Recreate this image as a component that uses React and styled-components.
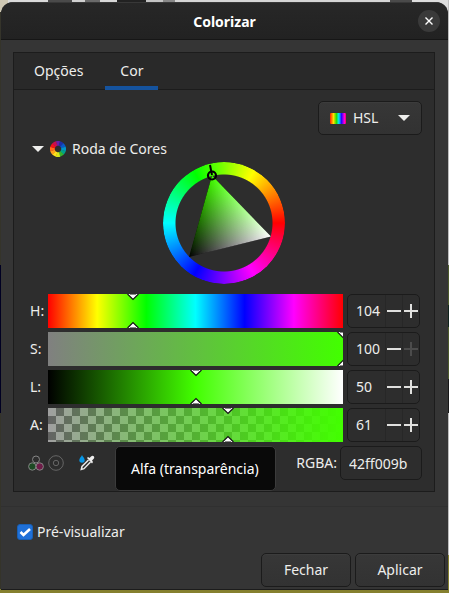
import React, { useState } from "react";
import styled, { createGlobalStyle, css } from "styled-components";

const GlobalStyle = createGlobalStyle`
  * { box-sizing: border-box; }
  body {
    margin: 0;
    background: #26251f;
    color: #eeeeec;
    font: 14px/20px "Noto Sans", "Open Sans", sans-serif;
  }
  button, input { font: inherit; color: inherit; }
`;

const Desktop = styled.div`
  min-height: 100vh;
  padding: 2px 1px 3px;
  background:
    linear-gradient(#85802f, #85802f) bottom / 100% 4px no-repeat,
    linear-gradient(#000022, #000022) 0 265px / 1px 148px no-repeat,
    linear-gradient(#4c5a2c 0 40px, #10241c 40px 62px, #4c5a2c 62px 114px, #181818 114px 148px, #bdbdbd 148px 290px, #85802f 290px) right 265px / 1px 328px no-repeat,
    linear-gradient(#bdbdbd, #bdbdbd) right 0 / 1px 265px no-repeat,
    linear-gradient(90deg, #cfc8b4 0 8px, #dadada 8px 48px, #4a4a4a 48px 72px, #d0d0d0 72px 85px, #6a6a6a 85px 100px, #d8d8d8 100px 117px, #222222 117px 146px, #c4c4c4 146px 163px, #888888 163px 175px, #d5d5d5 175px 390px, #4a4a4a 390px 412px, #dddddd 412px) top / 100% 12px no-repeat,
    #35342a;
`;

const Dialog = styled.main`
  display: flex;
  flex-direction: column;
  min-height: calc(100vh - 5px);
  background: #353535;
  border-radius: 12px 12px 0 0;
  border-bottom: 1px solid #1c1c1c;
  overflow: hidden;
`;

const TitleBar = styled.header`
  display: grid;
  grid-template-columns: 30px 1fr 30px;
  align-items: center;
  height: 38px;
  background: linear-gradient(#272727, #222222);
  border-top: 1px solid #383838;
  border-bottom: 1px solid #161616;
`;

const Title = styled.h1`
  grid-column: 2;
  margin: 0;
  padding-top: 1px;
  font-size: 14px;
  line-height: 20px;
  text-align: center;
  color: #ffffff;
`;

const CloseButton = styled.button`
  display: grid;
  place-items: center;
  width: 22px;
  height: 22px;
  padding: 0;
  border: 0;
  border-radius: 50%;
  background: #3a3a3a;
`;

const Panel = styled.section`
  margin: 12px 13px 0 12px;
  border: 1px solid #1c1c1c;
  background: #2d2d2d;
`;

const Tabs = styled.div`
  display: flex;
  gap: 6px;
  height: 37px;
  padding-left: 4px;
  background: #292929;
  border-bottom: 1px solid #1c1c1c;
`;

const Tab = styled.button`
  height: 37px;
  padding: 2px ${(p) => (p.$active ? 15 : 16)}px 0;
  border: 0;
  border-bottom: 4px solid ${(p) => (p.$active ? "#15539e" : "transparent")};
  background: none;
`;

const TabBody = styled.div`
  padding: 11px 12px 11px 14px;
`;

const surface = css`
  border: 1px solid #1b1b1b;
  border-radius: 5px;
  background: linear-gradient(#373737, #323232);
  box-shadow: inset 0 1px #3c3c3c;
`;

const ModeButton = styled.button`
  ${surface}
  display: flex;
  align-items: center;
  width: 104px;
  height: 34px;
  margin-left: auto;
  padding: 0 11px;
  gap: 7px;
`;

const Spectrum = styled.span`
  width: 16px;
  height: 11px;
  border-radius: 1px;
  background: linear-gradient(90deg, #ff1a00, #ffe000 22%, #22e000 40%, #00e5ff 55%, #2a00ff 72%, #ff00dd 90%, #ff0055);
`;

const Arrow = styled.span`
  width: 12px;
  height: 6px;
  margin-left: ${(p) => (p.$end ? "auto" : 0)};
  background: #eeeeec;
  clip-path: polygon(0 0, 100% 0, 50% 100%);
`;

const Expander = styled.button`
  display: flex;
  align-items: center;
  gap: 6px;
  height: 26px;
  margin-top: 1px;
  padding: 0 4px;
  border: 0;
  background: none;
`;

const WheelArea = styled.div`
  display: grid;
  place-items: center;
  padding: 0 2px 10px 0;
`;

const Wheel = styled.div`
  display: grid;
  width: 122px;
  height: 122px;
  > * { grid-area: 1 / 1; }
`;

const HueRing = styled.div`
  border-radius: 50%;
  background: conic-gradient(from 90deg, #f00, #f0f, #00f, #0ff, #0f0, #ff0, #f00);
  mask: radial-gradient(circle closest-side, transparent 48px, #000 49px);
`;

const Triangle = styled.svg`
  isolation: isolate;
  .add { mix-blend-mode: plus-lighter; }
`;

const Channels = styled.div`
  display: grid;
  gap: 4px;
`;

const Channel = styled.div`
  display: grid;
  grid-template-columns: 16px 1fr 73px;
  gap: 4px;
  align-items: center;
  height: 34px;
  padding: 0 2px 0 0;
`;

const ChannelLabel = styled.label`
  padding-left: 2px;
  white-space: nowrap;
`;

const Track = styled.div`
  position: relative;
  height: 34px;
  overflow: hidden;
  background: ${(p) => p.$fill};
`;

const Range = styled.input`
  width: 100%;
  height: 100%;
  margin: 0;
  opacity: 0;
`;

const Marker = styled.svg`
  position: absolute;
  top: 0;
  width: 12px;
  height: 34px;
  transform: translateX(-50%);
  pointer-events: none;
`;

const Spin = styled.div`
  display: grid;
  grid-template-columns: 1fr 17px 17px;
  height: 34px;
  border: 1px solid #1b1b1b;
  border-radius: 5px;
  background: #2d2d2d;
`;

const SpinValue = styled.input`
  width: 100%;
  min-width: 0;
  padding: 0 0 0 8px;
  border: 0;
  background: none;
`;

const Step = styled.button`
  display: grid;
  place-items: center;
  padding: 0;
  border: 0;
  border-left: 1px solid #272727;
  background: none;
  color: #e0e0de;
  &:disabled { color: #4c4c4c; }
`;

const Footer = styled.div`
  position: relative;
  display: flex;
  align-items: center;
  height: 34px;
  margin: 4px 0 0 -2px;
`;

const IconButton = styled.button`
  display: grid;
  place-items: center;
  width: 20px;
  height: 20px;
  padding: 0;
  border: 0;
  background: none;
  & + &:last-of-type { margin-left: 11px; }
`;

const HexLabel = styled.label`
  margin-left: auto;
  margin-right: 3px;
`;

const HexInput = styled.input`
  width: 82px;
  height: 34px;
  padding: 0 8px;
  border: 1px solid #1b1b1b;
  border-radius: 5px;
  background: #2d2d2d;
`;

const Tooltip = styled.div`
  position: absolute;
  top: 0;
  left: 89px;
  padding: 11px 16px 11px 15px;
  border: 1px solid #3b3b3b;
  border-radius: 5px;
  background: #090909;
  color: #ffffff;
  line-height: 21px;
  white-space: nowrap;
`;

const Bottom = styled.div`
  margin-top: 14px;
  padding: 17px 3px 2px;
  border-top: 1px solid #303030;
`;

const Preview = styled.label`
  display: flex;
  align-items: center;
  gap: 4px;
  height: 16px;
  margin-left: 13px;
`;

const CheckBox = styled.input`
  appearance: none;
  width: 16px;
  height: 16px;
  margin: 0;
  border: 1px solid #185fb4;
  border-radius: 3px;
  background: #2d2d2d;
  &:checked { background: #1f70d8; }
`;

const CheckStack = styled.span`
  display: grid;
  > * { grid-area: 1 / 1; }
  svg { pointer-events: none; }
`;

const Actions = styled.div`
  display: flex;
  justify-content: flex-end;
  gap: 4px;
  margin-top: 13px;
`;

const ActionButton = styled.button`
  ${surface}
  width: 90px;
  height: 34px;
  padding: 0;
`;

const checker = "repeating-conic-gradient(#646464 0 25%, #a0a0a0 0 50%) 0 0 / 16px 16px";

const channels = [
  { id: "H", value: 104, max: 360, fill: "linear-gradient(90deg, #f00, #ff0, #0f0, #0ff, #00f, #f0f, #f00)" },
  { id: "S", value: 100, max: 100, fill: "linear-gradient(90deg, #808080, #42ff00)" },
  { id: "L", value: 50, max: 100, fill: "linear-gradient(90deg, #000, #42ff00, #fff)" },
  { id: "A", value: 61, max: 100, fill: `linear-gradient(90deg, #42ff0000, #42ff00), ${checker}` },
];

const names = { H: "Matiz", S: "Saturação", L: "Luminosidade", A: "Alfa" };

function ChannelRow({ id, value: initial, max, fill }) {
  const [value, setValue] = useState(initial);
  const update = (n) => setValue(Math.max(0, Math.min(max, Number(n) || 0)));
  return (
    <Channel>
      <ChannelLabel htmlFor={`channel-${id}`}>{id}:</ChannelLabel>
      <Track $fill={fill}>
        <Range type="range" aria-label={names[id]} min="0" max={max} value={value} onChange={(e) => update(e.target.value)} />
        <Marker viewBox="0 0 12 34" style={{ left: `${(value / max) * 100}%` }}>
          <path d="M.5 0 6 5.500 11.500 0M.5 34 6 28.500 11.500 34" fill="#fff" stroke="#111" strokeWidth="1.200" />
          <path d="M3 .5h6M3 33.500h6" stroke="#888" />
        </Marker>
      </Track>
      <Spin>
        <SpinValue id={`channel-${id}`} value={value} onChange={(e) => update(e.target.value)} />
        <Step aria-label={`Diminuir ${names[id]}`} disabled={value <= 0} onClick={() => update(value - 1)}>
          <svg width="14" height="14"><path d="M0 7h14" stroke="currentColor" strokeWidth="2" /></svg>
        </Step>
        <Step aria-label={`Aumentar ${names[id]}`} disabled={value >= max} onClick={() => update(value + 1)}>
          <svg width="14" height="14"><path d="M0 7h14M7 0v14" stroke="currentColor" strokeWidth="2" /></svg>
        </Step>
      </Spin>
    </Channel>
  );
}

const slices = ["#6b1fa8", "#1c2fa8", "#0858c8", "#0095c8", "#00a38a", "#35b32e", "#d8e81a", "#ffe01a", "#ffa01a", "#ff6b1a", "#f3121a", "#c80d50"];

function WheelIcon() {
  return (
    <svg width="16" height="16" viewBox="-8 -8 16 16">
      {slices.map((color, i) => (
        <path key={color} d="M-1-3.200-2.200-7.700A8 8 0 0 1 2.200-7.700L1-3.200Z" fill={color} transform={`rotate(${i * 30})`} />
      ))}
    </svg>
  );
}

export default function App() {
  const [preview, setPreview] = useState(true);
  const [tab, setTab] = useState("Cor");
  const [hex, setHex] = useState("42ff009b");
  return (
    <>
      <GlobalStyle />
      <Desktop>
        <Dialog>
          <TitleBar>
            <Title>Colorizar</Title>
            <CloseButton aria-label="Fechar janela">
              <svg width="10" height="10"><path d="m1.500 1.500 7 7m0-7-7 7" stroke="#fff" strokeWidth="1.400" /></svg>
            </CloseButton>
          </TitleBar>
          <Panel>
            <Tabs role="tablist">
              {["Opções", "Cor"].map((name) => (
                <Tab key={name} role="tab" aria-selected={tab === name} $active={tab === name} onClick={() => setTab(name)}>{name}</Tab>
              ))}
            </Tabs>
            <TabBody>
              <ModeButton aria-haspopup="listbox"><Spectrum />HSL<Arrow $end /></ModeButton>
              <Expander aria-expanded="true"><Arrow /><WheelIcon />Roda de Cores</Expander>
              <WheelArea>
                <Wheel>
                  <HueRing />
                  <Triangle width="122" height="122">
                    <defs>
                      <linearGradient id="hue" gradientUnits="userSpaceOnUse" x1="67" y1="84.700" x2="49" y2="13.500">
                        <stop stopColor="#42ff00" stopOpacity="0" /><stop offset="1" stopColor="#42ff00" />
                      </linearGradient>
                      <linearGradient id="white" gradientUnits="userSpaceOnUse" x1="37.400" y1="54.300" x2="108" y2="74.500">
                        <stop stopColor="#fff" stopOpacity="0" /><stop offset="1" stopColor="#fff" />
                      </linearGradient>
                    </defs>
                    <path d="M49 13.500 108 74.500 26 95Z" fill="#000" />
                    <path className="add" d="M49 13.500 108 74.500 26 95Z" fill="url(#hue)" />
                    <path className="add" d="M49 13.500 108 74.500 26 95Z" fill="url(#white)" />
                    <path d="M47 3l2 10" stroke="#000" strokeWidth="2" />
                    <circle cx="49" cy="13.500" r="4" fill="none" stroke="#000" strokeWidth="2.200" />
                  </Triangle>
                </Wheel>
              </WheelArea>
              <Channels>
                {channels.map((c) => <ChannelRow key={c.id} {...c} />)}
              </Channels>
              <Footer>
                <IconButton aria-label="Fora do gamut">
                  <svg width="16" height="16" fill="none" stroke="#858585">
                    <circle cx="8" cy="4.500" r="3.500" />
                    <circle cx="4.300" cy="11.500" r="3.700" fill="#1d4a24" />
                    <circle cx="11.700" cy="11.500" r="3.700" fill="#6e1c48" />
                  </svg>
                </IconButton>
                <IconButton aria-label="Cores na web">
                  <svg width="16" height="16" fill="none" stroke="#666">
                    <circle cx="8" cy="8" r="7.300" /><circle cx="8" cy="8" r="2.700" />
                  </svg>
                </IconButton>
                <IconButton aria-label="Seletor de cores">
                  <svg width="16" height="16">
                    <path d="M3 0C2.500 1.500.3 3.100.3 5a2.700 2.700 0 0 0 5.400 0C5.700 3.100 3.500 1.500 3 0Z" fill="#0795e5" />
                    <path d="M9.500 5 3 11.500 2.300 14.500 5 13.700 11.500 7" fill="none" stroke="#e8e8e8" strokeWidth="1.500" />
                    <path d="m8 3 1-1 1.500 1L12 1.500c2-2 4.500.5 2.500 2.500L13 5.500 14 7l-1 1.500Z" fill="#eee" />
                  </svg>
                </IconButton>
                <HexLabel htmlFor="hex">RGBA:</HexLabel>
                <HexInput id="hex" value={hex} onChange={(e) => setHex(e.target.value)} />
                <Tooltip role="tooltip">Alfa (transparência)</Tooltip>
              </Footer>
            </TabBody>
          </Panel>
          <Bottom>
            <Preview>
              <CheckStack>
                <CheckBox type="checkbox" checked={preview} onChange={(e) => setPreview(e.target.checked)} />
                {preview && <svg width="16" height="16"><path d="m3.500 8 3 3 6.500-6" fill="none" stroke="#fff" strokeWidth="2.600" /></svg>}
              </CheckStack>
              Pré-visualizar
            </Preview>
            <Actions>
              <ActionButton>Fechar</ActionButton>
              <ActionButton>Aplicar</ActionButton>
            </Actions>
          </Bottom>
        </Dialog>
      </Desktop>
    </>
  );
}
